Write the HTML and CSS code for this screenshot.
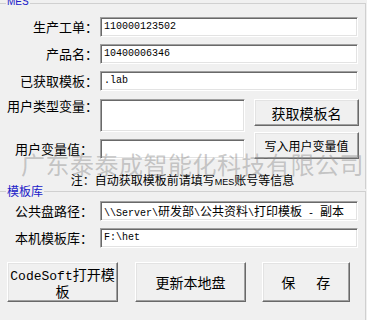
FILE: index.html
```html
<!DOCTYPE html>
<html lang="zh-CN">
<head>
  <meta charset="UTF-8">
  <title>模板设置</title>
  <link rel="stylesheet" href="styles.css">
</head>
<body>
  <!-- MES -->
  <div class="group mes">
    <span class="legend legend-mes">MES</span>

    <div class="row">
      <label class="label">生产工单：</label>
      <div class="field wide">110000123502</div>
    </div>
    <div class="row">
      <label class="label">产品名：</label>
      <div class="field wide">10400006346</div>
    </div>
    <div class="row">
      <label class="label">已获取模板：</label>
      <div class="field wide">.lab</div>
    </div>

    <div class="row row-top">
      <label class="label label-top">用户类型变量：</label>
      <div class="field narrow tall"></div>
      <button class="btn side-btn big">获取模板名</button>
    </div>
    <div class="row row-bottom">
      <label class="label short">用户变量值：</label>
      <div class="field narrow"></div>
      <button class="btn side-btn">写入用户变量值</button>
    </div>

    <div class="note">注：自动获取模板前请填写<span class="mes-word">MES</span>账号等信息</div>
  </div>

  <!-- 模板库 -->
  <div class="group lib">
    <span class="legend">模板库</span>

    <div class="row">
      <label class="label short">公共盘路径：</label>
      <div class="field wide">\\Server\<span class="cn">研发部</span>\<span class="cn">公共资料</span>\<span class="cn">打印模板</span> - <span class="cn">副本</span></div>
    </div>
    <div class="row">
      <label class="label short">本机模板库：</label>
      <div class="field wide">F:\het</div>
    </div>

    <div class="actions">
      <button class="btn action codesoft"><span class="mono">CodeSoft</span>打开模<br>板</button>
      <button class="btn action">更新本地盘</button>
      <button class="btn action save">保　存</button>
    </div>
  </div>

  <div class="watermark">广东泰泰成智能化科技有限公司</div>
</body>
</html>
```

FILE: styles.css
```css
body {
  margin: 0;
  padding-top: 3px;
  width: 367px;
  height: 320px;
  box-sizing: border-box;
  overflow: hidden;
  position: relative;
  background: #f0f0f0;
  font-family: "Noto Sans CJK SC", sans-serif;
  font-size: 13px;
  color: #000;
}

.group {
  position: relative;
  margin-left: -1px;
  width: 367px;
  box-sizing: border-box;
  border: 1px solid #d0d0d0;
}

.mes {
  height: 186px;
  padding-top: 13px;
  border-bottom: none;
}

.lib {
  margin-top: 2px;
  height: 140px;
  padding-top: 9px;
}

.legend {
  position: absolute;
  top: -8px;
  left: 6px;
  padding: 0 1px;
  background: #f0f0f0;
  color: #2020c8;
  font-size: 12px;
  line-height: 14px;
}

.legend-mes {
  font-family: "Liberation Sans", sans-serif;
  font-size: 10px;
  top: -9px;
}

.row {
  display: flex;
  align-items: center;
  margin-top: 7px;
}

.row:first-of-type {
  margin-top: 0;
}

.row-top {
  align-items: flex-start;
  margin-top: 8px;
}

.row-bottom {
  align-items: flex-end;
  margin-top: 0;
}

.label {
  flex: none;
  width: 98px;
  padding-right: 2px;
  text-align: right;
  line-height: 20px;
  white-space: nowrap;
}

.label-top {
  line-height: 14px;
}

.label.short {
  width: 93px;
  padding-right: 7px;
}

.field {
  flex: none;
  height: 20px;
  box-sizing: border-box;
  padding: 1px 3px 0;
  background: #fff;
  border: 1px solid;
  border-color: #a0a0a0 #fff #fff #a0a0a0;
  box-shadow: inset 1px 1px 0 #696969, inset -1px -1px 0 #e3e3e3;
  font-family: "Liberation Mono", monospace;
  font-size: 10px;
  line-height: 16px;
  white-space: nowrap;
  overflow: hidden;
}

.field .cn {
  font-family: "Noto Sans CJK SC", sans-serif;
  font-size: 12px;
}

.wide {
  width: 258px;
}

.narrow {
  width: 145px;
}

.tall {
  height: 33px;
}

.btn {
  flex: none;
  box-sizing: border-box;
  padding: 0;
  background: #f0f0f0;
  border: 1px solid;
  border-color: #fff #696969 #696969 #fff;
  box-shadow: inset -1px -1px 0 #a0a0a0, inset 1px 1px 0 #e3e3e3;
  font-family: "Noto Sans CJK SC", sans-serif;
  font-size: 12px;
  color: #000;
}

.side-btn {
  width: 105px;
  height: 27px;
  margin-left: 9px;
}

.big {
  font-size: 14px;
}

.note {
  margin-top: 13px;
  text-align: center;
  font-size: 12px;
  line-height: 16px;
}

.mes-word {
  font-family: "Liberation Sans", sans-serif;
  font-size: 9px;
}

.actions {
  display: flex;
  gap: 17px;
  margin-top: 14px;
  padding-left: 7px;
}

.action {
  width: 111px;
  height: 40px;
  font-size: 14px;
  line-height: 14px;
}

.codesoft .mono {
  font-family: "Liberation Mono", monospace;
  font-size: 13px;
}

.save {
  width: 88px;
  margin-left: -1px;
  letter-spacing: 3.5px;
  padding-left: 3px;
}

.watermark {
  position: absolute;
  top: 152px;
  left: 21px;
  font-size: 24px;
  line-height: 24px;
  letter-spacing: 0.5px;
  white-space: nowrap;
  color: rgba(140, 140, 140, 0.45);
  pointer-events: none;
}
```
